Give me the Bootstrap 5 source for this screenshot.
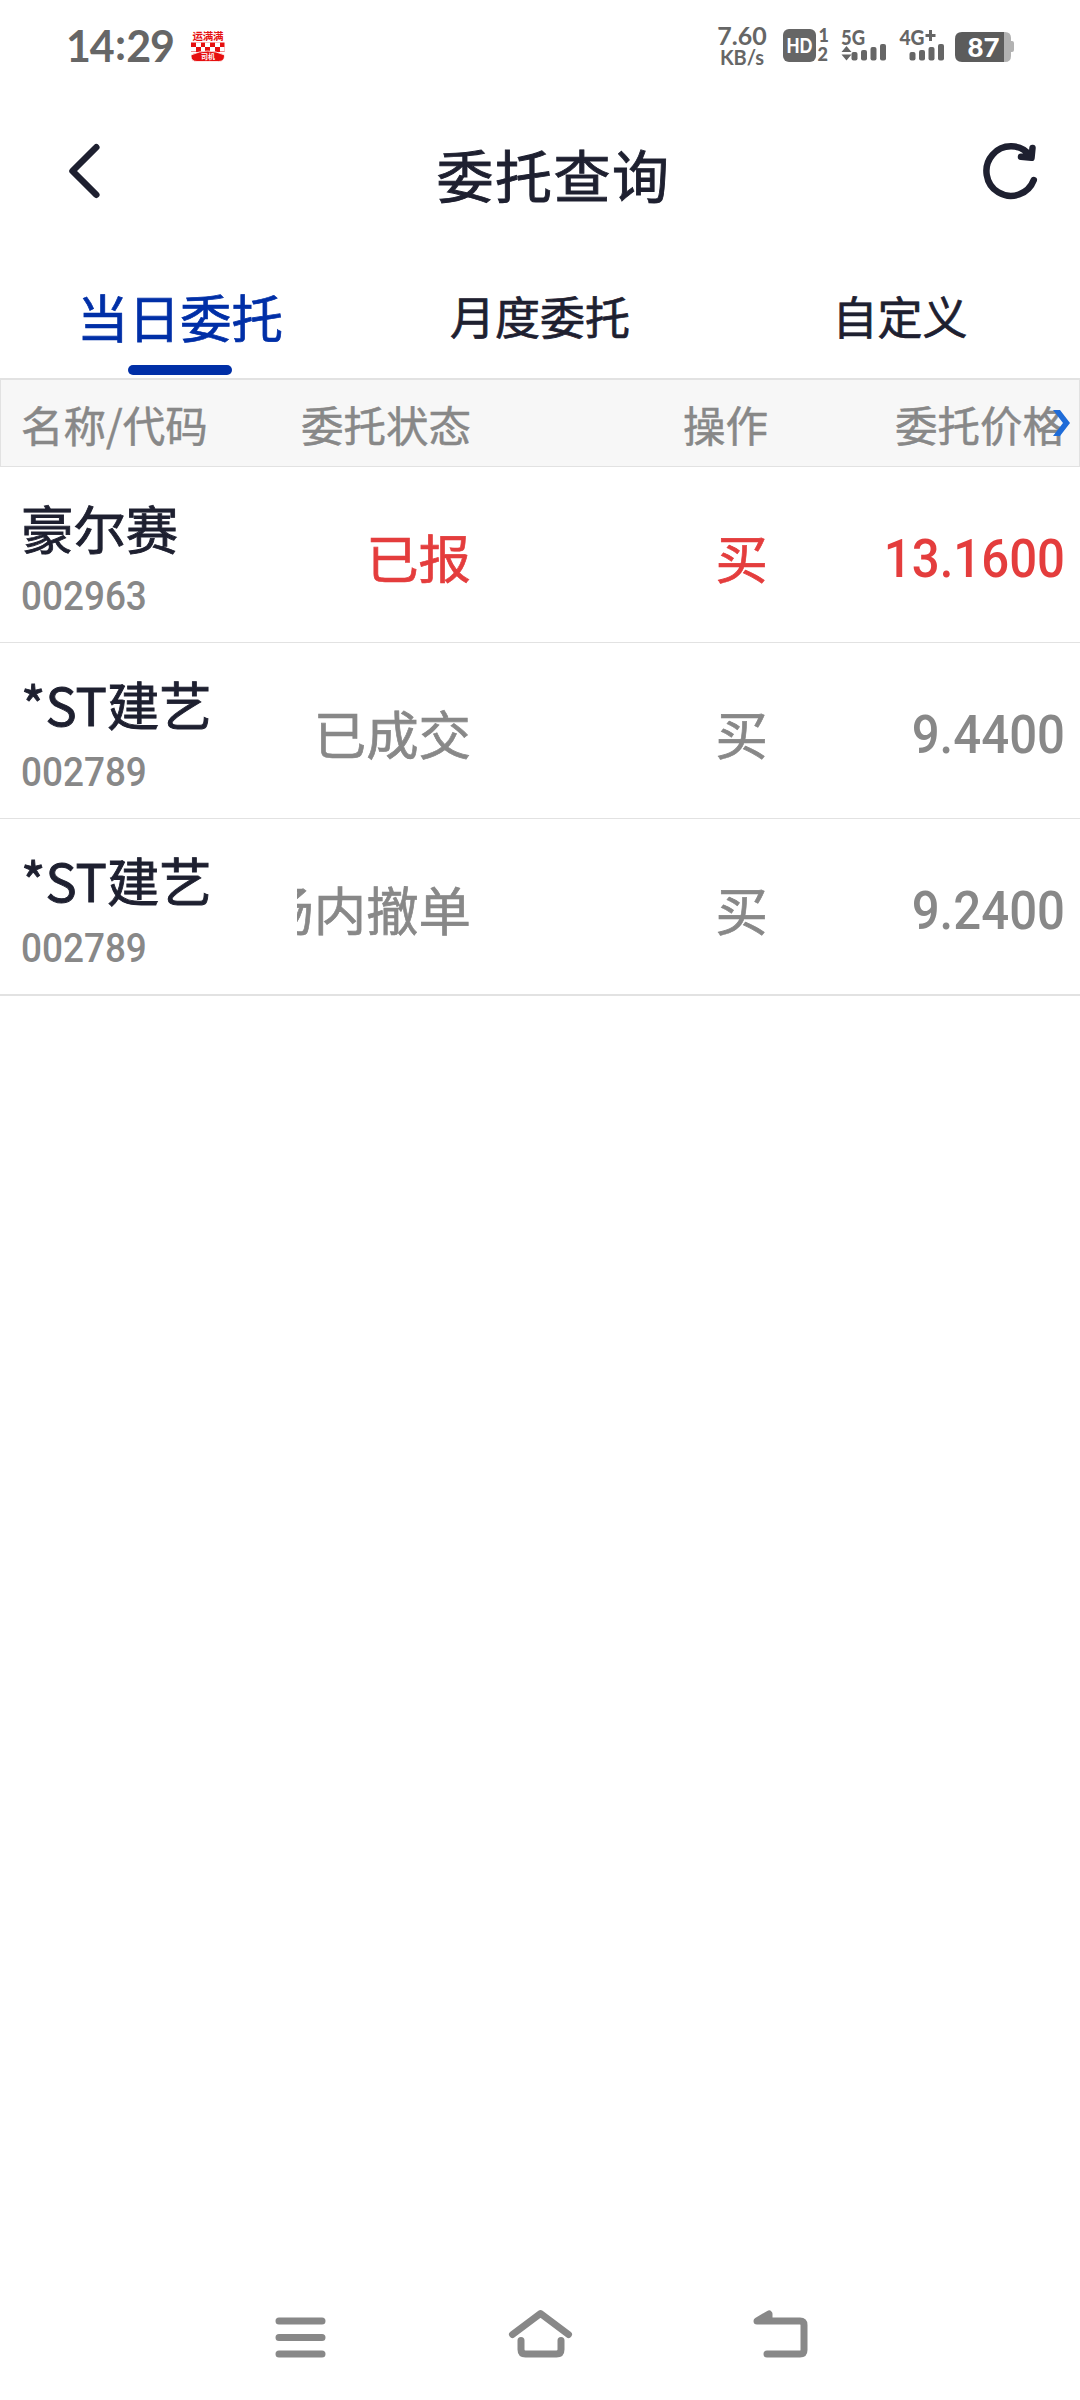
<!DOCTYPE html>
<html lang="zh-CN">
<head>
<meta charset="utf-8">
<meta name="viewport" content="width=device-width, initial-scale=1">
<title>委托查询</title>
<link href="https://cdn.jsdelivr.net/npm/bootstrap@5.3.0/dist/css/bootstrap.min.css" rel="stylesheet">
<style>
  :root { --ink:#1e2030; --muted:#888; --line:#e2e2e2; --brand:#002fa7; --up:#e43d3d; --sys:#666; }
  body { width:1080px; height:2400px; background:#fff; color:var(--ink); font-family:"Noto Sans CJK SC",sans-serif; overflow:hidden; }
  svg { display:block; flex:none; overflow:visible; }
  .status-bar { height:92px; padding-left:66px; color:var(--sys); }
  .clock { font:700 43px/44px Lato,sans-serif; width:108px; letter-spacing:-1.2px; white-space:nowrap; }
  .clock .colon { margin:0 1.5px; position:relative; top:-2px; }
  .app-icon { margin-left:17px; }
  .net-speed { width:54px; font:700 20px/22px Lato,sans-serif; margin-left:490px; }
  .net-speed .rate { font-size:25px; line-height:22px; }
  .sys-icons { margin-left:13px; }
  .title-bar { height:160px; padding:0 40px 3px 66px; }
  .title-bar h1 { font-size:57px; line-height:60px; font-weight:400; letter-spacing:1.5px; padding:4px 0 0 25px; -webkit-text-stroke:.9px; }
  .tab-bar { height:126px; }
  .tab-bar .nav-link { position:relative; height:126px; padding:0; padding-top:34px; color:var(--ink); font-size:45px; line-height:60px; -webkit-text-stroke:.7px; border-radius:0; }
  .tab-bar .nav-link.active { color:var(--brand); font-size:51.5px; background:none; }
  .tab-bar .nav-link.active::after { content:""; position:absolute; left:128px; bottom:3px; width:104px; height:10px; border-radius:5px; background:var(--brand); }
  .grid-line { display:grid; grid-template-columns:297px 174px 297px 297px; }
  .grid-head { height:89px; border:1px solid var(--line); border-top-width:2px; background:#f7f7f7; color:var(--muted); font-size:42.5px; line-height:60px; padding-top:14px; grid-template-columns:296px 174px 297px 297px; -webkit-text-stroke:.5px; position:relative; }
  .first-head { padding-left:20px; }
  .more { position:absolute; left:1052px; top:29px; }
  .order { height:176px; border-bottom:1px solid var(--line); font-size:52.4px; }
  .order:last-child { height:177px; border-bottom-width:2px; }
  .name-cell { padding:30px 0 0 21px; line-height:60px; }
  .stock-name { -webkit-text-stroke:.9px; height:60px; }
  .code { font:500 41px/44px Roboto,sans-serif; color:var(--muted); margin-top:17px; transform:scaleX(.9); transform-origin:left; }
  .val { display:flex; justify-content:flex-end; overflow:hidden; white-space:nowrap; color:var(--muted); line-height:60px; padding-top:59px; -webkit-text-stroke:.7px; }
  .price { font:500 54px/60px Roboto,sans-serif; padding-top:62px; transform:scaleX(.91); transform-origin:right; -webkit-text-stroke:0; }
  .live .val { color:var(--up); }
  .sys-nav { height:126px; padding:0 240px; }
</style>
<script src="https://cdn.jsdelivr.net/npm/bootstrap@5.3.0/dist/js/bootstrap.bundle.min.js"></script>
</head>
<body class="d-flex flex-column m-0">
  <div class="status-bar d-flex align-items-center">
    <div class="clock">14<span class="colon">:</span>29</div>
    <svg class="app-icon" width="34" height="32" viewBox="0 0 34 32">
      <text x="1.500" y="9.500" font-size="10.500" font-weight="700" textLength="31" fill="#e60f0f">运满满</text>
      <path fill="#e60f0f" d="M0 12.500h33.500V22H0z"/>
      <path fill="#fff" d="M5 12.500h5V17H5zM14 12.500h5V17h-5zM24 12.500h5V17h-5zM0 17h5v4.500H0zM10 17h4v4.500h-4zM19 17h5v4.500h-5zM29 17h4.500v4.500H29z"/>
      <path fill="#e60f0f" stroke="#fff" stroke-width=".8" d="M0 25q16.500-8 33.500 0v1q0 5.500-6 5.500H6q-6 0-6-5.500z"/>
      <text x="10" y="29" font-size="7" font-weight="700" textLength="14" fill="#fff">司机</text>
    </svg>
    <div class="net-speed text-center"><div class="rate">7.60</div><div>KB/s</div></div>
    <svg class="sys-icons" width="234" height="40" viewBox="782 26 234 40" fill="#666" font-family="Lato,sans-serif" font-weight="900">
      <rect x="783" y="29" width="33" height="33" rx="6"/>
      <text x="786.500" y="52.500" font-size="20" textLength="26" lengthAdjust="spacingAndGlyphs" fill="#fff">HD</text>
      <text x="818.500" y="42" font-size="18">1</text><text x="817.500" y="61" font-size="18">2</text>
      <text x="841" y="44.500" font-size="20" textLength="24" lengthAdjust="spacingAndGlyphs">5G</text>
      <path d="M841.500 52l5-6 5 6zM841.500 54.500l5 6 5-6z"/>
      <g id="bars"><rect x="851.500" y="52" width="6" height="8.500" rx="2"/><rect x="861" y="50" width="6" height="10.500" rx="2"/><rect x="870.500" y="47" width="6" height="13.500" rx="2"/><rect x="880" y="44" width="6" height="16.500" rx="2"/></g>
      <use href="#bars" x="58"/>
      <text x="899.500" y="44.500" font-size="20" textLength="25" lengthAdjust="spacingAndGlyphs">4G</text>
      <path d="M929 30h3v4h3.500v3H932v4h-3v-4h-3.500v-3h3.500z"/>
      <path fill="#b2b2b2" d="M1000 32h5q6 0 6 6v3h1q2 0 2 2v7q0 2-2 2h-1v4q0 6-6 6h-5z"/>
      <path fill="#5c5c5c" d="M962 32h42v30h-42q-7 0-7-7V39q0-7 7-7z"/>
      <text x="967.500" y="57" font-size="27" textLength="32" lengthAdjust="spacingAndGlyphs" fill="#fff">87</text>
    </svg>
  </div>

  <header class="title-bar d-flex align-items-center justify-content-between">
    <svg width="36" height="60" viewBox="66 140 36 60" fill="none" stroke="#1e2030" stroke-width="6.500" stroke-linecap="round" stroke-linejoin="round"><path d="M96.300 146.300L72.500 170l23.800 23.700"/></svg>
    <h1 class="m-0">委托查询</h1>
    <svg width="60" height="60" viewBox="980 140 60 60" fill="none" stroke="#1e2030" stroke-width="6.500" stroke-linecap="round" stroke-linejoin="round"><path d="M1033.800 179A24.500 24.800 0 1 1 1030 154.500"/><path d="M1032.500 147l-1 9.800-10.500-1M1026 153l4 2"/></svg>
  </header>

  <nav class="tab-bar nav nav-pills nav-justified">
    <a class="nav-link active" href="#">当日委托</a>
    <a class="nav-link" href="#">月度委托</a>
    <a class="nav-link" href="#">自定义</a>
  </nav>

  <main class="flex-grow-1">
    <div class="grid-line grid-head">
      <div class="first-head">名称/代码</div>
      <div class="text-end">委托状态</div>
      <div class="text-end">操作</div>
      <div class="text-end">委托价格</div>
      <svg class="more" width="20" height="28" viewBox="0 0 20 28"><path d="M0 1h7l10 13L7 27H0l10-13z" fill="#1f6cd8"/></svg>
    </div>
    <section>
      <div class="grid-line order live">
        <div class="name-cell"><div class="stock-name">豪尔赛</div><div class="code">002963</div></div>
        <div class="val">已报</div><div class="val">买</div><div class="val price">13.1600</div>
      </div>
      <div class="grid-line order">
        <div class="name-cell"><div class="stock-name">*ST建艺</div><div class="code">002789</div></div>
        <div class="val">已成交</div><div class="val">买</div><div class="val price">9.4400</div>
      </div>
      <div class="grid-line order">
        <div class="name-cell"><div class="stock-name">*ST建艺</div><div class="code">002789</div></div>
        <div class="val">场内撤单</div><div class="val">买</div><div class="val price">9.2400</div>
      </div>
    </section>
  </main>

  <footer class="sys-nav">
    <svg width="600" height="110" viewBox="240 2274 600 110" fill="none" stroke="#888" stroke-width="7" stroke-linecap="round" stroke-linejoin="round">
      <path d="M279 2321h43M279 2337.500h43M279 2354h43"/>
      <path d="M512.500 2334.500l28-21 28 21M521 2340.500v9q0 4.500 4.500 4.500h31q4.500 0 4.500-4.500v-9"/>
      <path d="M767 2354h33q4 0 4-4v-25q0-4-4-4h-43l12-7v4"/>
    </svg>
  </footer>
</body>
</html>
